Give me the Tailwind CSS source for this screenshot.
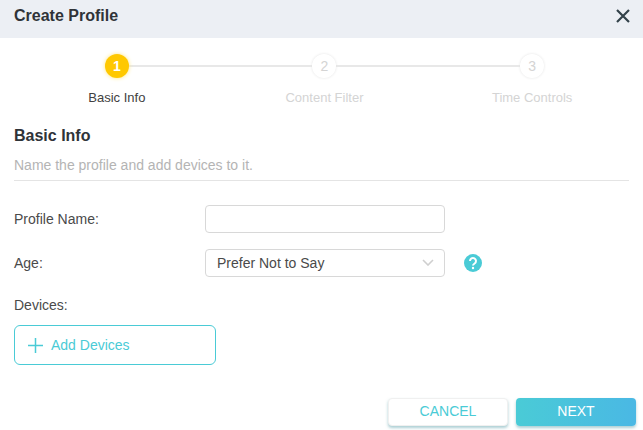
<!DOCTYPE html>
<html lang="en">
<head>
    <meta charset="UTF-8">
    <title>Create Profile</title>
    <script src="https://cdn.jsdelivr.net/npm/@tailwindcss/browser@4"></script>
</head>
<body class="w-[643px] h-[430px] overflow-hidden bg-white font-['Liberation_Sans',sans-serif] text-[14px] text-[#4a4a4a]">

    <!-- Header -->
    <div class="h-[38px] bg-[#eceff4] flex items-center justify-between pl-[14px] pr-[13px] pb-[7px]">
        <h2 class="text-[16px] font-bold text-[#2f3338]">Create Profile</h2>
        <svg class="w-[14px] h-[14px]" viewBox="0 0 14 14" fill="none" stroke="#33424a" stroke-width="2.2"><path d="M1 1l12 12M13 1L1 13"/></svg>
    </div>

    <!-- Steps -->
    <div class="grid grid-cols-3 w-[623px] ml-[13px] mt-[16px]">
        <div class="relative flex flex-col items-center">
            <div class="absolute left-1/2 top-[11px] w-full h-[2px] bg-[#e8e8e8]"></div>
            <div class="relative w-[24px] h-[24px] rounded-full bg-[#ffc800] text-white font-bold flex items-center justify-center shadow-[0_0_4px_#ffe680]">1</div>
            <span class="mt-[10px] text-[13px] text-[#414141]">Basic Info</span>
        </div>
        <div class="relative flex flex-col items-center">
            <div class="absolute left-1/2 top-[11px] w-full h-[2px] bg-[#e8e8e8]"></div>
            <div class="relative w-[24px] h-[24px] rounded-full bg-white text-[#d4d4d4] flex items-center justify-center shadow-[0_0_3px_#e4e4e4]">2</div>
            <span class="mt-[10px] text-[13px] text-[#d4d4d4]">Content Filter</span>
        </div>
        <div class="relative flex flex-col items-center">
            <div class="relative w-[24px] h-[24px] rounded-full bg-white text-[#d4d4d4] flex items-center justify-center shadow-[0_0_3px_#e4e4e4]">3</div>
            <span class="mt-[10px] text-[13px] text-[#d4d4d4]">Time Controls</span>
        </div>
    </div>

    <!-- Section title -->
    <div class="mx-[14px] mt-[18px] pb-[5px] border-b border-[#e4e4e4]">
        <h3 class="text-[16px] leading-[20px] font-bold text-[#2f3338]">Basic Info</h3>
        <p class="mt-[9px] text-[14px] leading-[20px] text-[#b4b4b4]">Name the profile and add devices to it.</p>
    </div>

    <!-- Form -->
    <div class="mx-[14px] mt-[24px] flex flex-col">
        <div class="flex items-center h-[28px]">
            <label class="w-[191px] pt-[1px]">Profile Name:</label>
            <input type="text" class="w-[240px] h-[28px] border border-[#d8d8d8] rounded-[4px]">
        </div>
        <div class="flex items-center h-[28px] mt-[16px]">
            <label class="w-[191px] pt-[2px]">Age:</label>
            <div class="w-[240px] h-[28px] border border-[#d8d8d8] rounded-[4px] flex items-center justify-between pl-[11px] pr-[10px]">
                <span class="pt-[2px]">Prefer Not to Say</span>
                <svg class="w-[12px] h-[7px]" viewBox="0 0 12 7" fill="none" stroke="#cfcfcf" stroke-width="1.6"><path d="M1 1l5 5 5-5"/></svg>
            </div>
            <svg class="w-[18px] h-[18px] ml-[19px]" viewBox="0 0 18 18">
                <circle cx="9" cy="9" r="9" fill="#4acbd6"/>
                <path d="M6 7a3 3 0 1 1 4.6 2.5C9.500 10.200 9 10.700 9 11.600" fill="none" stroke="#fff" stroke-width="2"/>
                <circle cx="9" cy="14" r="1.200" fill="#fff"/>
            </svg>
        </div>
        <label class="mt-[18px] leading-[20px]">Devices:</label>
        <button class="mt-[10px] w-[202px] h-[40px] border border-[#4acbd6] rounded-[6px] flex items-center pl-[12px] pt-[1px] text-[#4acbd6]">
            <svg class="w-[17px] h-[17px] mr-[7px]" viewBox="0 0 17 17" stroke="#4acbd6" stroke-width="1.500"><path d="M8.500 1v15M1 8.500h15"/></svg>
            Add Devices
        </button>
    </div>

    <!-- Footer buttons -->
    <div class="flex justify-end gap-[8px] pr-[7px] mt-[33px]">
        <button class="w-[120px] h-[28px] rounded-[4px] bg-white text-[#4acbd6] border border-[#f0f0f0] shadow-[0_2px_3px_rgba(90,160,170,0.5)]">CANCEL</button>
        <button class="w-[120px] h-[28px] rounded-[4px] bg-linear-to-r from-[#4acbd6] to-[#4ab8e4] text-white shadow-[0_2px_3px_rgba(90,160,170,0.5)]">NEXT</button>
    </div>

</body>
</html>
